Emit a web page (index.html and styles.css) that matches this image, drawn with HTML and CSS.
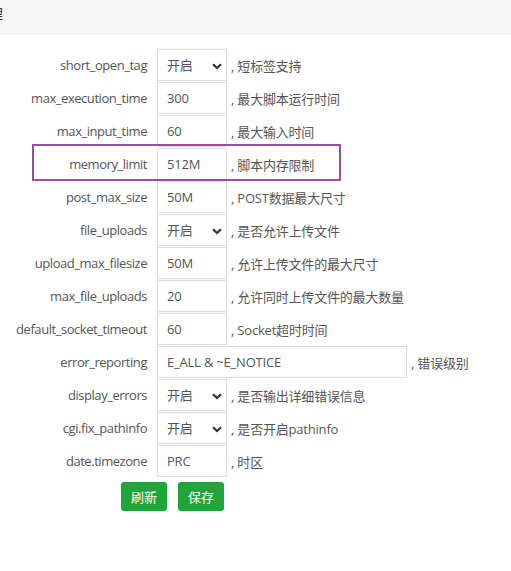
FILE: index.html
```html
<!DOCTYPE html>
<html lang="zh">
<head>
<meta charset="utf-8">
<link rel="stylesheet" href="styles.css">
</head>
<body>
<div class="topbar"><span class="title">理</span></div>
<div class="form">
  <div class="row"><label>short_open_tag</label><span class="sel"><select><option>开启</option></select></span><span class="tip">, 短标签支持</span></div>
  <div class="row"><label>max_execution_time</label><input value="300"><span class="tip">, 最大脚本运行时间</span></div>
  <div class="row"><label>max_input_time</label><input value="60"><span class="tip">, 最大输入时间</span></div>
  <div class="row hl"><label>memory_limit</label><input value="512M"><span class="tip">, 脚本内存限制</span><span class="mark"></span></div>
  <div class="row"><label>post_max_size</label><input value="50M"><span class="tip">, POST数据最大尺寸</span></div>
  <div class="row"><label>file_uploads</label><span class="sel"><select><option>开启</option></select></span><span class="tip">, 是否允许上传文件</span></div>
  <div class="row"><label>upload_max_filesize</label><input value="50M"><span class="tip">, 允许上传文件的最大尺寸</span></div>
  <div class="row"><label>max_file_uploads</label><input value="20"><span class="tip">, 允许同时上传文件的最大数量</span></div>
  <div class="row"><label>default_socket_timeout</label><input value="60"><span class="tip">, Socket超时时间</span></div>
  <div class="row"><label>error_reporting</label><input class="wide" value="E_ALL &amp; ~E_NOTICE"><span class="tip">, 错误级别</span></div>
  <div class="row"><label>display_errors</label><span class="sel"><select><option>开启</option></select></span><span class="tip">, 是否输出详细错误信息</span></div>
  <div class="row"><label>cgi.fix_pathinfo</label><span class="sel"><select><option>开启</option></select></span><span class="tip">, 是否开启pathinfo</span></div>
  <div class="row"><label>date.timezone</label><input value="PRC"><span class="tip">, 时区</span></div>
  <div class="btns"><button>刷新</button><button>保存</button></div>
</div>
</body>
</html>
```
FILE: styles.css
```css
* { box-sizing: border-box; }
html, body { margin: 0; padding: 0; background: #fff; }
body {
  font-family: "Open Sans", "Noto Sans CJK SC", sans-serif;
  font-size: 13px;
  color: #555;
  overflow: hidden;
}
.topbar {
  height: 34px;
  background: #f7f7f7;
  border-bottom: 1px solid #e8e8e8;
  overflow: hidden;
}
.title {
  display: inline-block;
  margin-left: -11px;
  margin-top: 3px;
  font-family: "Noto Sans CJK SC", sans-serif;
  font-size: 14px;
  color: #333;
  line-height: 20px;
}
.form { padding-top: 15px; }
.row {
  position: relative;
  display: flex;
  align-items: center;
  height: 32px;
  margin-bottom: 1px;
}
.row label {
  width: 147px;
  flex: none;
  text-align: right;
  margin-right: 10px;
  letter-spacing: -0.45px;
}
.row input, .row select {
  font: inherit;
  color: #555;
  height: 32px;
  border: 1px solid #dcdcdc;
  border-radius: 1px;
  background: #fff;
  padding: 0 9px;
  outline: none;
  letter-spacing: -0.2px;
}
.row input { width: 70px; }
.row input.wide { width: 250px; }
.sel { position: relative; display: inline-block; }
.row select {
  width: 70px;
  appearance: none;
  -webkit-appearance: none;
  background-image: url("data:image/svg+xml;utf8,<svg xmlns='http://www.w3.org/2000/svg' width='10' height='7' viewBox='0 0 10 7'><path d='M1 1.2 L5 5 L9 1.2' fill='none' stroke='%23333' stroke-width='2.2'/></svg>");
  background-repeat: no-repeat;
  background-position: 54px 13px;
}
.tip {
  margin-left: 4px;
  white-space: nowrap;
  letter-spacing: -0.2px;
}
.mark {
  position: absolute;
  left: 32px;
  top: -4px;
  width: 309px;
  height: 37px;
  border: 2px solid #9a4f9e;
  pointer-events: none;
}
.btns {
  display: flex;
  gap: 11px;
  padding-left: 121px;
  margin-top: 5px;
}
.btns button {
  font-family: "Noto Sans CJK SC", sans-serif;
  font-size: 13px;
  color: #fff;
  background: #20a53a;
  border: none;
  border-radius: 3px;
  width: 46px;
  height: 29px;
  padding: 0;
}
```
